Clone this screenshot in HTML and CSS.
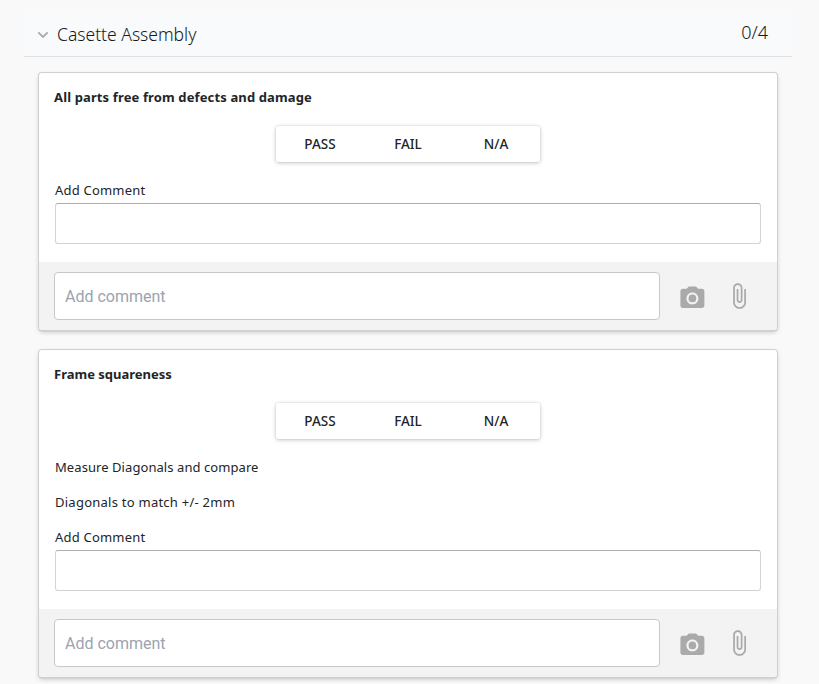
FILE: index.html
```
<!DOCTYPE html>
<html lang="en">
<head>
<meta charset="utf-8">
<title>Casette Assembly</title>
<link rel="stylesheet" href="styles.css">
</head>
<body>
<svg class="defs" width="0" height="0" aria-hidden="true">
  <symbol id="camera" viewBox="0 0 24 24"><circle cx="12" cy="12" r="3.2"/><path d="M9 2 7.17 4H4c-1.1 0-2 .9-2 2v12c0 1.1.9 2 2 2h16c1.1 0 2-.9 2-2V6c0-1.1-.9-2-2-2h-3.17L15 2H9zm3 15c-2.76 0-5-2.24-5-5s2.24-5 5-5 5 2.24 5 5-2.24 5-5 5z"/></symbol>
  <symbol id="clip" viewBox="0 0 24 24"><path d="M16.5 6v11.5c0 2.21-1.79 4-4 4s-4-1.79-4-4V5c0-1.38 1.12-2.5 2.5-2.5s2.5 1.12 2.5 2.5v10.5c0 .55-.45 1-1 1s-1-.45-1-1V6H10v9.5c0 1.38 1.12 2.5 2.5 2.5s2.5-1.12 2.5-2.5V5c0-2.21-1.79-4-4-4S7 2.79 7 5v12.5c0 3.04 2.46 5.5 5.5 5.5s5.5-2.46 5.5-5.5V6h-1.5z"/></symbol>
</svg>
<main class="page">
  <header class="section-head">
    <svg class="chevron" viewBox="0 0 12 8"><path d="M1.3 1.3 6 6l4.7-4.7"/></svg>
    <h1>Casette Assembly</h1>
    <span class="count">0/4</span>
  </header>
  <section class="card">
    <div class="body">
      <h2 class="wide">All parts free from defects and damage</h2>
      <div class="choices"><button>PASS</button><button>FAIL</button><button>N/A</button></div>
      <label class="line" for="c1">Add Comment</label>
      <input class="field" id="c1">
    </div>
    <footer>
      <input class="comment" placeholder="Add comment">
      <svg class="icon camera"><use href="#camera"/></svg>
      <svg class="icon clip"><use href="#clip"/></svg>
    </footer>
  </section>
  <section class="card">
    <div class="body">
      <h2>Frame squareness</h2>
      <div class="choices"><button>PASS</button><button>FAIL</button><button>N/A</button></div>
      <p class="line">Measure Diagonals and compare</p>
      <p class="line match">Diagonals to match +/- 2mm</p>
      <label class="line" for="c2">Add Comment</label>
      <input class="field" id="c2">
    </div>
    <footer>
      <input class="comment" placeholder="Add comment">
      <svg class="icon camera"><use href="#camera"/></svg>
      <svg class="icon clip"><use href="#clip"/></svg>
    </footer>
  </section>
</main>
</body>
</html>
```
FILE: styles.css
```
* { box-sizing: border-box; }
body {
  margin: 0;
  background: #f9f9f9;
  color: #212529;
  font-family: "Segoe UI", "Noto Sans", sans-serif;
}
.defs { position: absolute; }
.page { min-height: 684px; padding: 9px 27px 7px 24px; }
.section-head {
  display: flex;
  height: 48px;
  padding: 0 24px 0 13px;
  background: #f8fafc;
  border-bottom: 1px solid #dee2e6;
}
.chevron {
  width: 12px;
  height: 8px;
  margin: 22px 8px 0 0;
  fill: none;
  stroke: #aaa;
  stroke-width: 1.8;
}
h1 {
  flex: 1;
  margin: 0;
  color: #15191d;
  font-size: 17.5px;
  font-weight: 350;
  line-height: 51px;
}
.count { color: #15191d; font-size: 18px; font-weight: 350; line-height: 46px; }
.card {
  width: 738px;
  margin: 16px 0 0 15px;
  border-radius: 3px;
  background: #fff;
  box-shadow: 0 0 0 1px #d0d0d0, 0 1px 1px rgba(0,0,0,.3), 0 2px 5px rgba(0,0,0,.22);
}
.card + .card { margin-top: 20px; }
.body { padding: 0 16px 18px; }
h2 {
  height: 53px;
  margin: 0 0 0 -1px;
  font-size: 13px;
  font-weight: 700;
  line-height: 49px;
}
.wide { letter-spacing: .13px; }
.choices {
  display: flex;
  width: 264px;
  height: 36px;
  margin: 0 auto 11px 221px;
  border-radius: 2px;
  box-shadow: 0 0 2px rgba(0,0,0,.12), 0 1px 4px rgba(0,0,0,.22);
}
button {
  width: 88px;
  padding: 0;
  border: 0;
  background: transparent;
  color: #212529;
  font: 500 13.5px/36px "Segoe UI", "Noto Sans", sans-serif;
}
.line {
  display: block;
  height: 35px;
  margin: 0;
  font-size: 13px;
  line-height: 35px;
  letter-spacing: .07px;
}
.match { letter-spacing: .25px; }
label.line { height: 30px; letter-spacing: .2px; }
.field {
  display: block;
  width: 706px;
  height: 41px;
  border: 1px solid #d3d3d3;
  border-top-color: #aeaeae;
  border-radius: 3px;
  background: #fff;
}
footer {
  display: flex;
  height: 68px;
  padding: 10px 15px;
  border-radius: 0 0 3px 3px;
  background: #f3f3f3;
}
.comment {
  width: 606px;
  height: 48px;
  padding: 0 10px;
  border: 1px solid #c8c8c8;
  border-radius: 4px;
  background: #fff;
  font: 16px Roboto, sans-serif;
}
.comment::placeholder { color: #9ca3af; opacity: 1; }
.icon { flex: none; fill: #aaa; }
.camera { width: 28.8px; height: 28.8px; margin: 11.5px 0 0 17.5px; }
.clip { width: 28px; height: 28px; margin: 10px 0 0 18.5px; }
```
